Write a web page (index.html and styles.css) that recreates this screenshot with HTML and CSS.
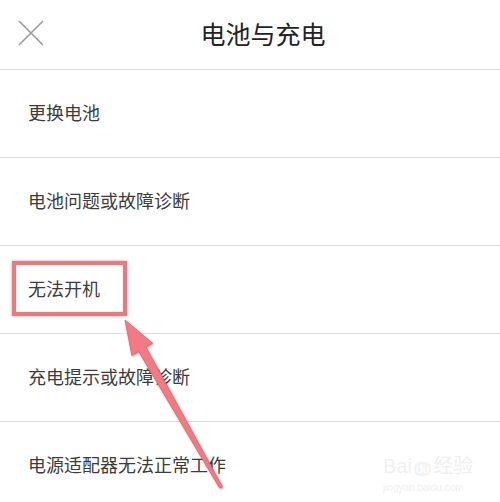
FILE: index.html
```html
<!DOCTYPE html>
<html lang="zh-CN">
<head>
    <meta charset="UTF-8">
    <meta name="viewport" content="width=device-width, initial-scale=1.0">
    <title>电池与充电</title>
    <link rel="stylesheet" href="styles.css">
</head>
<body>
    <div class="page">
        <!-- Top bar -->
        <div class="header">
            <svg class="close" width="26" height="26" viewBox="0 0 26 26">
                <path d="M1 1 L25 25 M25 1 L1 25" stroke="#9a9a9a" stroke-width="1.6" fill="none"/>
            </svg>
            <h1 class="title">电池与充电</h1>
        </div>

        <!-- Menu rows -->
        <ul class="list">
            <li class="row">更换电池</li>
            <li class="row">电池问题或故障诊断</li>
            <li class="row">无法开机<span class="mark"></span></li>
            <li class="row">充电提示或故障诊断</li>
            <li class="row">电源适配器无法正常工作</li>
        </ul>

        <!-- Annotation arrow -->
        <svg class="arrow" width="500" height="502" viewBox="0 0 500 502">
            <polygon points="125,320 152.6,343.2 145.9,347 222.5,487 219.5,488 138.6,351.4 131.8,355.4"
                     fill="#f37a83" stroke="#d9676f" stroke-width="0.8" stroke-linejoin="round"/>
        </svg>

        <div class="watermark">
            <div class="wm-logo">Bai<span class="wm-du">du</span>经验</div>
            <div class="wm-url">jingyan.baidu.com</div>
        </div>
    </div>
</body>
</html>
```

FILE: styles.css
```css
body {
    margin: 0;
    background-color: #ffffff;
    font-family: "Noto Sans CJK SC", "Noto Sans", sans-serif;
}
.page {
    position: relative;
    width: 500px;
    height: 502px;
    overflow: hidden;
}
.header {
    display: flex;
    align-items: center;
    height: 69px;
    border-bottom: 1px solid #dedede;
}
.close {
    margin-left: 18px;
    margin-top: -4px;
    flex-shrink: 0;
}
.title {
    flex: 1;
    margin: -4px 0 0 0;
    padding-right: 18px;
    text-align: center;
    font-size: 25px;
    font-weight: normal;
    color: #222222;
}
.list {
    list-style: none;
    margin: 0;
    padding: 0;
}
.row {
    position: relative;
    display: flex;
    align-items: center;
    height: 88px;
    padding-left: 28px;
    padding-bottom: 4px;
    box-sizing: border-box;
    border-bottom: 1px solid #dedede;
    font-size: 18px;
    color: #3c3c3c;
}
.mark {
    position: absolute;
    left: 12px;
    top: 15px;
    width: 115px;
    height: 55px;
    box-sizing: border-box;
    border: 4px solid #e9787f;
    box-shadow: 0 0 3px rgba(0, 0, 0, 0.3), inset 0 0 2px rgba(0, 0, 0, 0.2);
}
.arrow {
    position: absolute;
    left: 0;
    top: 0;
    filter: drop-shadow(1px 1px 1px rgba(0, 0, 0, 0.35));
}
.watermark {
    position: absolute;
    left: 383px;
    top: 455px;
    color: #f0f0f0;
    font-family: "Liberation Sans", sans-serif;
}
.wm-logo {
    font-size: 20px;
    line-height: 22px;
    font-family: "Liberation Sans", "Noto Sans CJK SC", sans-serif;
}
.wm-du {
    font-size: 12px;
    background-color: #f4f4f4;
    color: #ffffff;
    border-radius: 6px;
    padding: 0 2px;
    margin: 0 2px;
}
.wm-url {
    font-size: 10px;
    margin-top: 2px;
}
```
